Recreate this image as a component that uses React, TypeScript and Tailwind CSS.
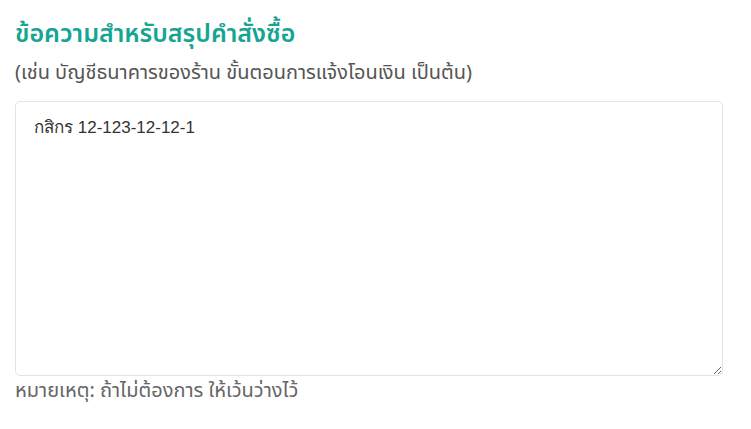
export default function App() {
  return (
    <div className="w-[751px] h-[429px] bg-white px-[15px] pt-[14px] font-['Noto_Sans','Noto_Sans_Thai',sans-serif]">
      <h2 className="text-[25px] leading-[36px] font-semibold text-[#16a592]">ข้อความสำหรับสรุปคำสั่งซื้อ</h2>
      <p className="mt-[8px] text-[20px] leading-[28px] text-[#555]">(เช่น บัญชีธนาคารของร้าน ขั้นตอนการแจ้งโอนเงิน เป็นต้น)</p>
      <textarea
        defaultValue="กสิกร 12-123-12-12-1"
        className="mt-[15px] block w-[708px] h-[275px] rounded-[5px] border border-[#e3e3e3] px-[18px] py-[14px] text-[17px] leading-[24px] text-[#333] font-['Liberation_Sans',sans-serif] outline-none resize-y"
      />
      <p className="mt-[0px] text-[20px] leading-[28px] text-[#666]">หมายเหตุ: ถ้าไม่ต้องการ ให้เว้นว่างไว้</p>
    </div>
  );
}
